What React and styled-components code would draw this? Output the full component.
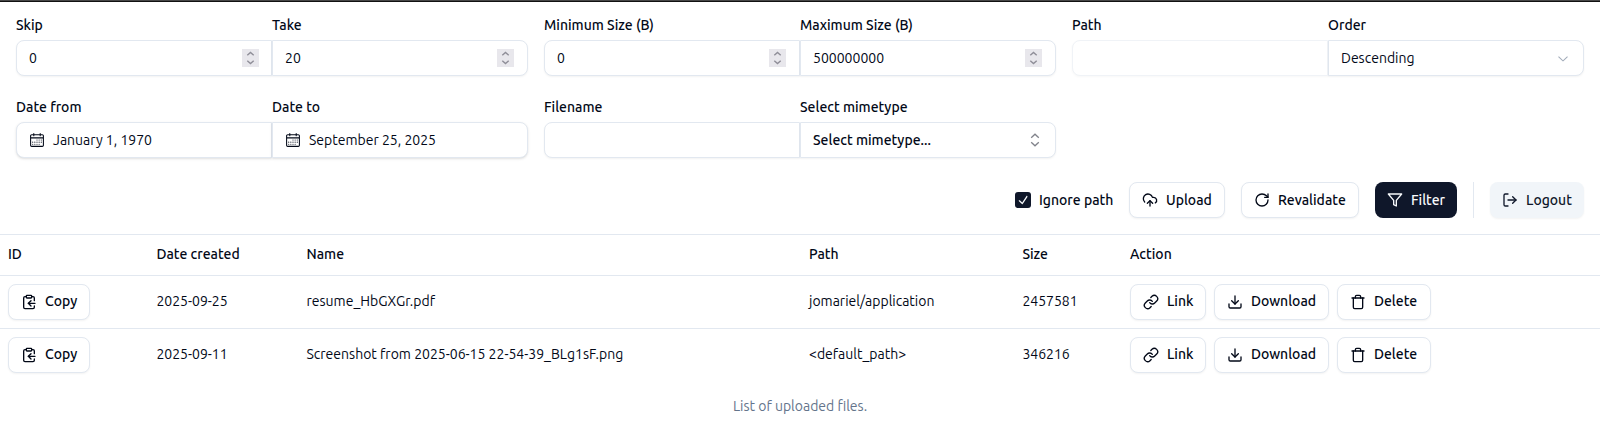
import React from "react";
import styled, { createGlobalStyle, css } from "styled-components";
import { RxCalendar, RxChevronDown, RxCheck } from "react-icons/rx";
import { LuClipboardCopy, LuLink, LuDownload, LuTrash, LuCloudUpload, LuRotateCw, LuFilter, LuLogOut } from "react-icons/lu";

const Global = createGlobalStyle`
  *, *::before, *::after { box-sizing: border-box; }
  body {
    margin: 0;
    background: #fff;
    color: #020817;
    font-family: Ubuntu, "Noto Sans", "Open Sans", sans-serif;
    font-size: 14px;
    line-height: 20px;
  }
`;

const Page = styled.main`
  height: 430px;
  overflow: hidden;
  border-top: 1px solid #474747;
  box-shadow: inset 0 1px 0 #111;
`;

const Filters = styled.section`
  display: grid;
  grid-template-columns: repeat(3, 512px);
  gap: 23px 16px;
  padding: 16px 16px 0;
`;

const Pair = styled.div`
  display: grid;
  grid-template-columns: 256px 256px;
`;

const Field = styled.div`
  display: flex;
  flex-direction: column;
  gap: 5px;
`;

const Txt = styled.span`
  white-space: nowrap;
  font-weight: ${(p) => (p.$medium ? 500 : 400)};
`;

const Label = styled.label`
  height: 18px;
  line-height: 16px;
  display: block;
`;

const Control = styled.div`
  height: 36px;
  display: flex;
  align-items: center;
  padding: 0 12px;
  gap: 8px;
  background: #fff;
  border: 1px solid #e2e8f0;
  border-radius: ${(p) => (p.$right ? "0 8px 8px 0" : "8px 0 0 8px")};
  box-shadow: ${(p) => (p.$raised ? "0 1px 3px rgba(0,0,0,.1), 0 1px 2px -1px rgba(0,0,0,.1)" : "0 1px 2px rgba(0,0,0,.05)")};
  opacity: ${(p) => (p.$disabled ? 0.5 : 1)};
  svg { flex: none; }
`;

const Spacer = styled.i`
  flex: 1;
`;

const SpinBox = styled.div`
  width: 17px;
  height: 18px;
  margin-right: ${(p) => (p.$inset ? 1 : 0)}px;
  background: #e8e7ec;
  display: grid;
  place-items: center;
`;

const Spinner = ({ inset }) => (
  <SpinBox $inset={inset}>
    <svg width="17" height="18" viewBox="0 0 17 18" fill="none" stroke="#8f8e98" strokeWidth="1.4">
      <path d="M5.3 6.2 8.5 3.4 11.7 6.2M5.3 11.8 8.5 14.6 11.7 11.8" />
    </svg>
  </SpinBox>
);

const SortCaret = () => (
  <svg width="16" height="16" viewBox="0 0 16 16" fill="none" stroke="#81838b" strokeWidth="1.3">
    <path d="M4.2 5.8 8 2.2 11.8 5.8M4.2 10.2 8 13.8 11.8 10.2" />
  </svg>
);

const Toolbar = styled.div`
  display: flex;
  justify-content: flex-end;
  gap: 16px;
  padding: 24px 16px 16px;
`;

const CheckLabel = styled.div`
  display: flex;
  align-items: center;
  gap: 8px;
  width: 98px;
`;

const Checkbox = styled.span`
  width: 16px;
  height: 16px;
  flex: none;
  border-radius: 3px;
  background: #0f172a;
  color: #f8fafc;
  display: grid;
  place-items: center;
`;

const variants = {
  outline: css`
    background: #fff;
    border: 1px solid #e2e8f0;
    box-shadow: 0 1px 2px rgba(0, 0, 0, 0.05);
  `,
  primary: css`
    background: #0f172a;
    color: #f8fafc;
    border: 0;
  `,
  secondary: css`
    background: #f1f5f9;
    color: #0f172a;
    border: 0;
    box-shadow: 0 1px 2px rgba(0, 0, 0, 0.05);
  `,
};

const Button = styled.button`
  font: inherit;
  color: inherit;
  width: ${(p) => p.$w}px;
  height: 36px;
  padding: 0 0 0 12px;
  display: flex;
  align-items: center;
  gap: 8px;
  border-radius: 8px;
  ${(p) => variants[p.$kind || "outline"]}
  svg { flex: none; }
`;

const Divider = styled.span`
  width: 1px;
  height: 36px;
  background: #e2e8f0;
`;

const Row = styled.div`
  display: grid;
  grid-template-columns: 148.4px 150.1px 502.5px 213.4px 107.6px 1fr;
  align-items: center;
  height: ${(p) => (p.$head ? 41 : 53)}px;
  padding: 0 8px;
  border-top: 1px solid #e2e8f0;
  ${Txt} { padding-bottom: 2px; }
`;

const Actions = styled.div`
  display: flex;
  gap: 8px;
`;

const Caption = styled.p`
  margin: 15px 0 0;
  text-align: center;
  color: #64748b;
`;

const files = [
  { date: "2025-09-25", name: "resume_HbGXGr.pdf", path: "jomariel/application", size: "2457581" },
  { date: "2025-09-11", name: "Screenshot from 2025-06-15 22-54-39_BLg1sF.png", path: "<default_path>", size: "346216" },
];

const FieldBlock = ({ label, right, raised, disabled, children }) => (
  <Field>
    <Label><Txt $medium>{label}</Txt></Label>
    <Control $right={right} $raised={raised} $disabled={disabled}>{children}</Control>
  </Field>
);

export default function App() {
  return (
    <Page>
      <Global />
      <Filters>
        <Pair>
          <FieldBlock label="Skip"><Txt>0</Txt><Spacer /><Spinner /></FieldBlock>
          <FieldBlock label="Take" right><Txt>20</Txt><Spacer /><Spinner inset /></FieldBlock>
        </Pair>
        <Pair>
          <FieldBlock label="Minimum Size (B)"><Txt>0</Txt><Spacer /><Spinner inset /></FieldBlock>
          <FieldBlock label="Maximum Size (B)" right><Txt>500000000</Txt><Spacer /><Spinner inset /></FieldBlock>
        </Pair>
        <Pair>
          <FieldBlock label="Path" disabled />
          <FieldBlock label="Order" right><Txt>Descending</Txt><Spacer /><RxChevronDown size={16} color="#64748b" opacity={0.6} /></FieldBlock>
        </Pair>
        <Pair>
          <FieldBlock label="Date from" raised><RxCalendar size={16} /><Txt>January 1, 1970</Txt></FieldBlock>
          <FieldBlock label="Date to" right raised><RxCalendar size={16} /><Txt>September 25, 2025</Txt></FieldBlock>
        </Pair>
        <Pair>
          <FieldBlock label="Filename" />
          <FieldBlock label="Select mimetype" right><Txt $medium>Select mimetype...</Txt><Spacer /><SortCaret /></FieldBlock>
        </Pair>
      </Filters>
      <Toolbar>
        <CheckLabel><Checkbox><RxCheck size={16} /></Checkbox><Txt $medium>Ignore path</Txt></CheckLabel>
        <Button $w={96}><LuCloudUpload size={16} /><Txt $medium>Upload</Txt></Button>
        <Button $w={118}><LuRotateCw size={16} /><Txt $medium>Revalidate</Txt></Button>
        <Button $w={82} $kind="primary"><LuFilter size={16} /><Txt $medium>Filter</Txt></Button>
        <Divider />
        <Button $w={94} $kind="secondary"><LuLogOut size={16} /><Txt $medium>Logout</Txt></Button>
      </Toolbar>
      <Row $head>
        {["ID", "Date created", "Name", "Path", "Size", "Action"].map((h) => <Txt key={h} $medium>{h}</Txt>)}
      </Row>
      {files.map((f) => (
        <Row key={f.name}>
          <Button $w={82}><LuClipboardCopy size={16} /><Txt $medium>Copy</Txt></Button>
          <Txt>{f.date}</Txt>
          <Txt>{f.name}</Txt>
          <Txt>{f.path}</Txt>
          <Txt>{f.size}</Txt>
          <Actions>
            <Button $w={76}><LuLink size={16} /><Txt $medium>Link</Txt></Button>
            <Button $w={115}><LuDownload size={16} /><Txt $medium>Download</Txt></Button>
            <Button $w={94}><LuTrash size={16} /><Txt $medium>Delete</Txt></Button>
          </Actions>
        </Row>
      ))}
      <Caption><Txt>List of uploaded files.</Txt></Caption>
    </Page>
  );
}
